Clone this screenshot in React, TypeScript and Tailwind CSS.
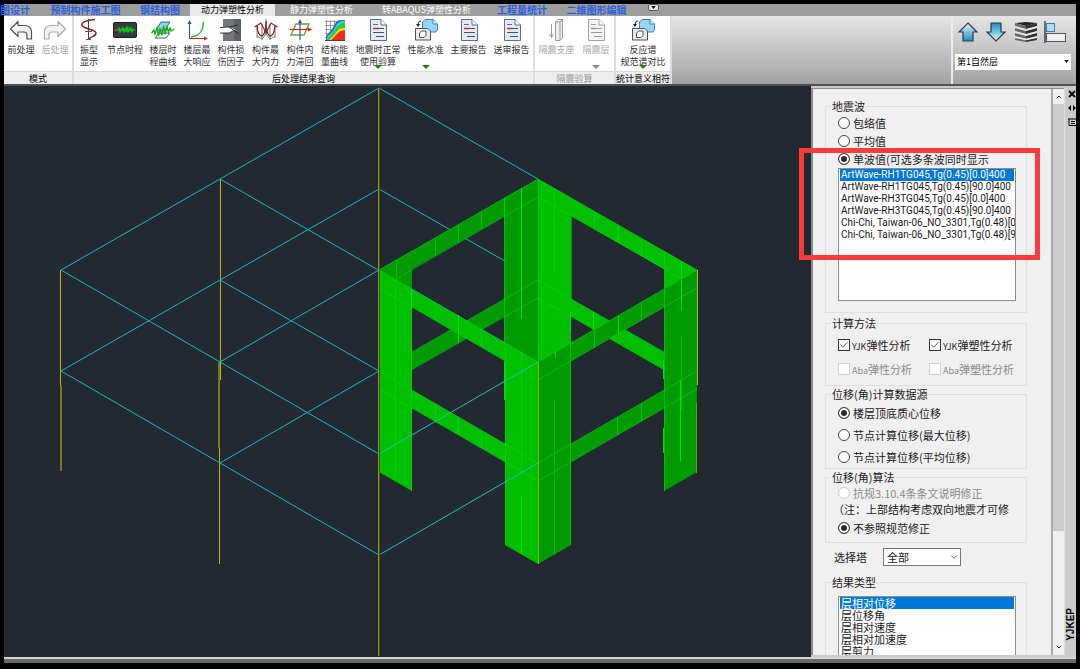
import { useState, type ReactNode } from 'react'
import { Check, ChevronDown, ChevronUp } from 'lucide-react'

const waves = [
  'ArtWave-RH1TG045,Tg(0.45)[0.0]400',
  'ArtWave-RH1TG045,Tg(0.45)[90.0]400',
  'ArtWave-RH3TG045,Tg(0.45)[0.0]400',
  'ArtWave-RH3TG045,Tg(0.45)[90.0]400',
  'Chi-Chi, Taiwan-06_NO_3301,Tg(0.48)[0.0]',
  'Chi-Chi, Taiwan-06_NO_3301,Tg(0.48)[90.0]'
]

const results = ['层相对位移', '层位移角', '层相对速度', '层相对加速度', '层剪力']

const tabs = [
  { label: '图设计', style: 'w-[37px] justify-end pr-[11px] text-[10px] font-bold text-[#2b5fe3]' },
  { label: '预制构件施工图', style: 'w-[89px] justify-center text-[10px] font-bold text-[#2b5fe3]' },
  { label: '钢结构图', style: 'w-[60px] justify-center text-[10px] font-bold text-[#2b5fe3]' },
  { label: '动力弹塑性分析', style: 'w-[85px] justify-center text-[9px] text-black bg-[#e9e9e9]' },
  { label: '静力弹塑性分析', style: 'w-[93px] justify-center text-[9px] text-white' },
  { label: '转ABAQUS弹塑性分析', style: 'w-[117px] justify-center text-[9px] text-white' },
  { label: '工程量统计', style: 'w-[74px] justify-center text-[10px] font-bold text-[#2b5fe3]' },
  { label: '二维图形编辑', style: 'w-[75px] justify-center text-[10px] font-bold text-[#2b5fe3]' }
]

/* ---------- ribbon icons ---------- */

function Svg({ children }: { children: ReactNode }) {
  return (
    <svg viewBox="0 0 24 24" className="h-6 w-6 shrink-0" fill="none" aria-hidden="true">
      {children}
    </svg>
  )
}

function BackIcon() {
  return (
    <Svg>
      <path d="M1.500 11 L9 3.500 V7.500 H16 Q22.500 8 22.500 14 V21 H18 V17 Q18 14 15 14 H9 V18.500 Z" fill="#f6f7f8" stroke="#4b5157" strokeWidth="1.200" strokeLinejoin="round" />
    </Svg>
  )
}

function ForwardIcon() {
  return (
    <Svg>
      <path d="M22.500 11 L15 3.500 V7.500 H8 Q1.500 8 1.500 14 V21 H6 V17 Q6 14 9 14 H15 V18.500 Z" fill="#f4f4f4" stroke="#a9a9a9" strokeWidth="1.200" strokeLinejoin="round" />
    </Svg>
  )
}

function ModeIcon() {
  return (
    <Svg>
      <path d="M11.500 1 V22" stroke="#444" />
      <path d="M18 1.500 C10 2 4 4 5 7.500 C6 11 19 11 19 15 C19 19 13 18 11 22" stroke="#8c2020" strokeWidth="1.500" />
      <path d="M8 13.500 H15 M9 21.500 H14" stroke="#555" />
    </Svg>
  )
}

function NodeIcon() {
  return (
    <Svg>
      <rect x="0.500" y="4.500" width="23" height="15" rx="1.500" fill="#353b41" stroke="#17191b" />
      <path d="M2 12 H5 L6 10 L7 14 L8 11 L9 13 L10 9 L11 15 L12 10 L13 14 L14 8 L15 15 L16 10 L17 13 L18 10 L19 14 L20 11 L21 12 H22.500" stroke="#10c81c" strokeWidth="1.100" />
      <circle cx="2.500" cy="12" r="1.300" fill="#f01818" />
    </Svg>
  )
}

function StoryCurveIcon() {
  return (
    <Svg>
      <path d="M8 15 H19 L15 20 H4 Z" fill="#eef7fc" stroke="#47697f" />
      <path d="M10 4 H19 L14 12 H5 Z" fill="#9bcdf0" stroke="#2b65a0" />
      <path d="M0.500 15 L3 12 L4 16 L6 10 L7.500 18 L9 11 L11 17 L12.500 8 L14 16 L16 9 L17.500 14 L19 10 L20 13 L23.500 11" stroke="#12ad18" strokeWidth="1.400" />
    </Svg>
  )
}

function AxesIcon() {
  return (
    <Svg>
      <path d="M4.500 21 V4" stroke="#2454b8" />
      <path d="M2.500 6 L4.500 2 L6.500 6 Z" fill="#2454b8" />
      <path d="M4 20.500 H20" stroke="#d12222" />
      <path d="M19 18.500 L23 20.500 L19 22.500 Z" fill="#d12222" />
      <path d="M6 19 C14 18 18 14 18.500 4" stroke="#19c427" strokeWidth="1.500" />
    </Svg>
  )
}

function DamageIcon() {
  return (
    <Svg>
      <rect x="4" y="1" width="18" height="22" fill="#74777a" />
      <rect x="15" y="1" width="7" height="22" fill="#5f6265" />
      <path d="M1 9 L10 9 L17 12 L10 15 L1 15 L4 12 Z" fill="#fff" />
      <path d="M1 9.500 L10 9 L20 16 M1 15 L10 15 L16 12 M10 9 L19 7" stroke="#222" strokeWidth="0.900" />
    </Svg>
  )
}

function ForceIcon() {
  return (
    <Svg>
      <path d="M12 1 V17 M3 7 V20 M21 7 V20 M8 6 V22 M16 6 V22" stroke="#555" strokeWidth="0.800" />
      <path d="M0.500 9 L7 5 L12 15 L17 5 L23.500 9" stroke="#8d2323" strokeWidth="1.200" />
      <path d="M3 8 Q4 18 8 18 Q12 16 12 3 Q12 16 16 18 Q20 18 21 8" stroke="#8d2323" strokeWidth="1.300" />
      <path d="M3 18 L8 21 L12 16 L16 21 L21 18" stroke="#3a9a4c" strokeWidth="0.900" />
    </Svg>
  )
}

function PlaneIcon() {
  return (
    <Svg>
      <path d="M8 6 H21 L16 17 H3 Z" stroke="#6fa043" strokeWidth="1.400" />
      <path d="M12 22 V3" stroke="#2c58b6" strokeWidth="1.200" />
      <path d="M10 5 L12 1 L14 5 Z" fill="#2c58b6" />
      <path d="M2 11.500 H21" stroke="#d02525" strokeWidth="1.200" />
      <path d="M20 9.500 L24 11.500 L20 13.500 Z" fill="#d02525" />
    </Svg>
  )
}

function EnergyIcon() {
  return (
    <Svg>
      <path d="M3.500 2 V22 M7.500 2 V22 M11.500 2 V22 M15.500 2 V22 M2 3.500 H22 M2 7.500 H22 M2 11.500 H22 M2 15.500 H22 M2 19.500 H22" stroke="#888" strokeWidth="0.800" />
      <path d="M3 22 V18 L9 11 L13 4 L17 2 H22 V22 Z" fill="#2866e5" />
      <path d="M4 22 V19 L10 13 L14 6 L18 3 H22 V22 Z" fill="#35d8c6" />
      <path d="M4 22 L10 14 L15 8 L19 5 H22 V22 Z" fill="#33c926" />
      <path d="M6 22 L12 16 L16 11 L22 10 V22 Z" fill="#f2e326" />
      <path d="M8 22 L13 17 L17 13 L22 12 V22 Z" fill="#f52a20" />
      <path d="M2 22.500 H22" stroke="#444" />
    </Svg>
  )
}

function ReportIcon({ muted = false }: { muted?: boolean }) {
  const edge = muted ? '#a2a2a2' : '#5b6f8c'
  return (
    <Svg>
      <path d="M4.500 1.500 H15 L20.500 7 V22.500 H4.500 Z" fill={muted ? '#f5f5f5' : '#e4ebf7'} stroke={edge} strokeLinejoin="round" />
      <path d="M15 1.500 V7 H20.500" fill="#fff" stroke={edge} />
      <path d="M7 6.500 H12" stroke={edge} />
      <path d="M7 10.500 H12" stroke={muted ? '#999' : '#d12b2b'} strokeWidth="1.500" />
      <path d="M12 10.500 H18 M7 14.500 H18 M10 18.500 H18" stroke={muted ? '#999' : '#47536a'} />
    </Svg>
  )
}

function CompareIcon() {
  return (
    <Svg>
      <path d="M8.500 4 L11 1.500 H19 L23.500 6 V12 L22 14 H8.500 Z" fill="#9ad4f4" stroke="#3c83ba" />
      <path d="M19 1.500 V6 H23.500" fill="#d8f0fc" stroke="#3c83ba" />
      <path d="M1.500 10.500 H14 L16.500 13 V22 H1.500 Z" fill="#e9ebee" stroke="#4b5057" />
      <path d="M5.500 15 L7.500 13 H12 V17.500 L10 19.500 H5.500 Z" fill="#fff" stroke="#4b5057" />
      <path d="M7 3 Q4 3 4 7" stroke="#222" />
      <path d="M2 6 H6 L4 9 Z" fill="#222" />
    </Svg>
  )
}

function BearingIcon() {
  return (
    <Svg>
      <path d="M10.500 4 L13 1.500 H17.500 V20 L15 22.500 H10.500 Z" fill="#efefef" stroke="#9b9b9b" />
      <path d="M10.500 4 H15 V22 M15 4 L17.500 1.500" stroke="#9b9b9b" />
      <path d="M6.500 6 V19 M4.500 16 L6.500 19.500 L8.500 16" stroke="#9b9b9b" />
    </Svg>
  )
}

/* ---------- ribbon ---------- */

type ToolProps = {
  icon: ReactNode
  lines: string[]
  width?: string
  disabled?: boolean
  menu?: boolean
}

function Tool({ icon, lines, width = 'w-[34px]', disabled, menu }: ToolProps) {
  return (
    <button
      disabled={disabled}
      className={`relative flex shrink-0 flex-col items-center pt-[2px] text-[9px] leading-[12px] whitespace-nowrap ${width} ${
        disabled ? 'text-[#a8a8a8]' : 'text-[#333]'
      }`}
    >
      {icon}
      <span className="mt-[2px] flex flex-col items-center">
        {lines.map(line => (
          <span key={line}>{line}</span>
        ))}
      </span>
      {menu && (
        <svg viewBox="0 0 8 4" className={`absolute bottom-[2px] h-1 w-2 ${disabled ? 'fill-[#8b8b8b]' : 'fill-[#23800c]'}`}>
          <path d="M0 0 H8 L4 4 Z" />
        </svg>
      )}
    </button>
  )
}

function Group({ title, muted, children }: { title: string; muted?: boolean; children: ReactNode }) {
  return (
    <section className="flex shrink-0 flex-col border-r-2 border-[#dcdcdc] bg-white">
      <div className="flex min-h-0 flex-1">{children}</div>
      <h2
        className={`h-[13px] border-t border-[#dadada] bg-[#ededed] text-center text-[9px] leading-[13px] whitespace-nowrap ${
          muted ? 'text-[#999]' : 'text-black'
        }`}
      >
        {title}
      </h2>
    </section>
  )
}

function StoryPicker() {
  return (
    <div className="flex w-[125px] shrink-0 flex-col border-l-2 border-[#ececec] pl-[2px]">
      <div className="flex h-[35px] items-start justify-between pt-[5px] pr-[10px] pl-[2px]">
        <button aria-label="上一层">
          <svg viewBox="0 0 22 22" className="h-[22px] w-[22px]">
            <defs>
              <linearGradient id="up" x1="0" y1="0" x2="0" y2="1">
                <stop offset="0" stopColor="#e4f7fd" />
                <stop offset="1" stopColor="#148bc8" />
              </linearGradient>
            </defs>
            <path d="M11 2 L20 11 H16 V20 H6 V11 H2 Z" fill="url(#up)" stroke="#333b42" strokeWidth="1.200" />
          </svg>
        </button>
        <button aria-label="下一层">
          <svg viewBox="0 0 22 22" className="h-[22px] w-[22px]">
            <defs>
              <linearGradient id="down" x1="0" y1="0" x2="0" y2="1">
                <stop offset="0" stopColor="#148bc8" />
                <stop offset="1" stopColor="#e4f7fd" />
              </linearGradient>
            </defs>
            <path d="M11 20 L20 11 H16 V2 H6 V11 H2 Z" fill="url(#down)" stroke="#333b42" strokeWidth="1.200" />
          </svg>
        </button>
        <button aria-label="全楼">
          <svg viewBox="0 0 24 22" className="h-[22px] w-[24px]">
            <path d="M1 2 L12 1 L23 2 L12 5 Z" fill="#222" />
            <path d="M1 2 L12 5 V8 L1 5 Z M1 7 L12 10 V13 L1 10 Z M1 12 L12 15 V18 L1 15 Z M1 17 L12 19 V21 L1 19 Z" fill="#6b6b6b" />
            <path d="M23 2 L12 5 V8 L23 5 Z M23 7 L12 10 V13 L23 10 Z M23 12 L12 15 V18 L23 15 Z M23 17 L12 19 V21 L23 19 Z" fill="#333" />
            <path d="M1 6 L12 9 L23 6 M1 11 L12 14 L23 11 M1 16 L12 18.500 L23 16" stroke="#e6e6e6" strokeWidth="1.500" fill="none" />
          </svg>
        </button>
        <button aria-label="对齐">
          <svg viewBox="0 0 22 22" className="h-[22px] w-[22px]">
            <path d="M1 0 V22" stroke="#222" strokeWidth="1.200" />
            <rect x="2.500" y="2.500" width="8" height="8" fill="#a9def4" stroke="#3a7fa8" />
            <rect x="2.500" y="12.500" width="19" height="8" fill="#eeeef4" stroke="#555" />
          </svg>
        </button>
      </div>
      <label className="relative mt-[3px] mr-[5px] block">
        <span className="sr-only">楼层</span>
        <select className="block h-4 w-full appearance-none bg-white pl-[2px] text-[9px] text-black">
          <option>第1自然层</option>
        </select>
        <svg viewBox="0 0 6 4" className="pointer-events-none absolute top-[6px] right-[2px] h-[3px] w-[5px]">
          <path d="M0 0 H6 L3 4 Z" />
        </svg>
      </label>
    </div>
  )
}

function Ribbon() {
  return (
    <header className="shrink-0">
      <nav className="flex h-[12px] bg-[#9d9d9d]">
        {tabs.map(({ label, style }) => (
          <button key={label} className={`flex shrink-0 items-center leading-[12px] whitespace-nowrap ${style}`}>
            {label}
          </button>
        ))}
        <button aria-label="最小化功能区" className="ml-[14px] flex h-[7px] w-[11px] items-center justify-center rounded-[2px] border border-[#555] bg-[#e8e8e8]">
          <svg viewBox="0 0 6 4" className="h-[3px] w-[5px]">
            <path d="M0 0 H6 L3 4 Z" />
          </svg>
        </button>
      </nav>
      <div className="flex h-[68px] bg-gradient-to-b from-[#e6e6e6] to-[#a3a3a3]">
        <Group title="模式">
          <Tool icon={<BackIcon />} lines={['前处理']} />
          <Tool icon={<ForwardIcon />} lines={['后处理']} disabled />
        </Group>
        <Group title="后处理结果查询">
          <Tool icon={<ModeIcon />} lines={['振型', '显示']} width="w-[30px]" />
          <Tool icon={<NodeIcon />} lines={['节点时程']} width="w-[42px]" />
          <Tool icon={<StoryCurveIcon />} lines={['楼层时', '程曲线']} />
          <Tool icon={<AxesIcon />} lines={['楼层最', '大响应']} />
          <Tool icon={<DamageIcon />} lines={['构件损', '伤因子']} />
          <Tool icon={<ForceIcon />} lines={['构件最', '大内力']} width="w-[35px]" />
          <Tool icon={<PlaneIcon />} lines={['构件内', '力滞回']} />
          <Tool icon={<EnergyIcon />} lines={['结构能', '量曲线']} width="w-[35px]" />
          <Tool icon={<ReportIcon />} lines={['地震时正常', '使用验算']} width="w-[52px]" menu />
          <Tool icon={<CompareIcon />} lines={['性能水准']} width="w-[43px]" menu />
          <Tool icon={<ReportIcon />} lines={['主要报告']} width="w-[43px]" />
          <Tool icon={<ReportIcon />} lines={['送审报告']} width="w-[43px]" />
        </Group>
        <Group title="隔震验算" muted>
          <Tool icon={<BearingIcon />} lines={['隔震支座']} width="w-[43px]" disabled />
          <Tool icon={<ReportIcon muted />} lines={['隔震层']} width="w-[36px]" disabled menu />
        </Group>
        <Group title="统计意义相符">
          <Tool icon={<CompareIcon />} lines={['反应谱', '规范谱对比']} width="w-[54px]" menu />
        </Group>
        <div className="flex-1" />
        <StoryPicker />
      </div>
      <div className="h-[2px] bg-[#4d5154]" />
    </header>
  )
}

/* ---------- model view ---------- */

const LIGHT = '#00be00'
const DARK = '#009b00'
const EDGE = '#00df10'

type Pt = [number, number]

// A vertical plate standing on the segment a-b, from its top edge down by h
function Plate({ a, b, h, fill }: { a: Pt; b: Pt; h: number; fill: string }) {
  return <polygon points={`${a[0]},${a[1]} ${b[0]},${b[1]} ${b[0]},${b[1] + h} ${a[0]},${a[1] + h}`} fill={fill} />
}

function ModelView() {
  return (
    <svg viewBox="4 86 807 571" className="h-full w-full" role="img" aria-label="结构模型">
      <g fill="none">
        <path d="M60.500 270 V385 M220.500 179 V380 M219.500 448 V564" stroke="#bdb80a" />
        <path d="M61 385 V471 M219 362 V448" stroke="#77751d" strokeWidth="2" />
      </g>
      <g stroke="#18b6bd" fill="none">
        <path d="M538 179 L379 88 L61 270 L379 454 M220 179 L538 362 M379 270 L220 362" />
        <path d="M538 280 L379 189 L61 371 L379 555 M220 280 L379 371 L220 463" />
      </g>

      {/* rear column and beams */}
      <Plate a={[504, 198]} b={[538, 179]} h={202} fill={DARK} />
      <Plate a={[538, 179]} b={[571, 198]} h={202} fill={LIGHT} />
      <Plate a={[379, 371]} b={[538, 280]} h={18} fill={DARK} />
      <Plate a={[538, 280]} b={[697, 371]} h={18} fill={LIGHT} />
      <Plate a={[379, 270]} b={[412, 251]} h={202} fill={DARK} />
      <Plate a={[664, 251]} b={[697, 270]} h={202} fill={LIGHT} />
      <Plate a={[379, 270]} b={[538, 179]} h={18} fill={DARK} />
      <Plate a={[538, 179]} b={[697, 270]} h={18} fill={LIGHT} />
      <g stroke={EDGE} fill="none" strokeOpacity="0.550">
        <path d="M379 270 L538 179 L697 270 M396 279 L538 197 L682 279" />
        <path d="M412 352 L538 280 L664 352 M504 317 L538 298 L571 317" />
        <path d="M504.500 198 V343 M571.500 217 V299 M554.500 189 V274 M538.500 179 V362" />
        <path d="M396.500 260 V278 M435.500 238 V256 M458.500 225 V243 M481.500 211 V229 M504.500 198 V216" />
        <path d="M594.500 212 V230 M618.500 225 V243 M641.500 239 V257 M664.500 252 V269" />
      </g>
      <path d="M521.500 188 V319 M681.500 261 V279 M593.500 312 V330 M570.500 312 V332" stroke={EDGE} />

      {/* side columns */}
      <Plate a={[379, 270]} b={[412, 289]} h={202} fill={LIGHT} />
      <Plate a={[664, 289]} b={[697, 270]} h={202} fill={DARK} />

      {/* front column and beams */}
      <Plate a={[379, 371]} b={[538, 463]} h={18} fill={LIGHT} />
      <Plate a={[538, 463]} b={[697, 371]} h={18} fill={DARK} />
      <Plate a={[505, 343]} b={[538, 362]} h={202} fill={LIGHT} />
      <Plate a={[538, 362]} b={[571, 343]} h={202} fill={DARK} />
      <Plate a={[379, 270]} b={[538, 362]} h={18} fill={LIGHT} />
      <Plate a={[538, 362]} b={[697, 270]} h={18} fill={DARK} />
      <g stroke={EDGE} fill="none" strokeOpacity="0.550">
        <path d="M379 270 L538 362 L697 270 M379 288 L538 380 L697 288" />
        <path d="M379 371 L538 463 L697 371 M379 389 L538 481 L697 389" />
        <path d="M395.500 280 V482 M411.500 289 V491 M505.500 343 V545 M521.500 353 V478 M554.500 400 V555" />
        <path d="M570.500 343 V545 M664.500 289 V491 M681.500 336 V410 M435.500 302 V320 M481.500 329 V347" />
        <path d="M594.500 330 V348 M641.500 302 V320 M435.500 404 V422 M458.500 417 V435 M481.500 430 V448" />
        <path d="M617.500 417 V435 M641.500 403 V421" />
      </g>
      <path d="M411.500 290 V308 M458.500 315 V343 M521.500 496 V554 M618.500 316 V334 M681.500 280 V311 M680.500 380 V461 M663.500 428 V453 M663.500 360 V379 M504.500 362 V400 M555.500 352 V358" stroke={EDGE} />

      <path d="M538 362 L379 454 M538 463 L379 555" stroke="#18c2b4" />
      <path d="M378.500 88 V656" stroke="#8f8f16" strokeWidth="1" />
      <path d="M379.500 88 V656" stroke="#4d521c" strokeWidth="1" />
      <path d="M538.500 362 V564" stroke="#86b800" />
      <path d="M697.500 270 V385" stroke="#a0c800" />
      <path d="M696.500 403 V473" stroke="#4fae00" />
    </svg>
  )
}

/* ---------- dock panel ---------- */

function Radio({ name, label, checked, disabled, onChange, row }: {
  name: string
  label: string
  checked?: boolean
  disabled?: boolean
  onChange?: () => void
  row: string
}) {
  return (
    <label className={`flex items-center gap-[3px] whitespace-nowrap ${row} ${disabled ? 'text-[#8a8a8a]' : ''}`}>
      <input
        type="radio"
        name={name}
        checked={!!checked}
        disabled={disabled}
        onChange={onChange}
        className="h-3 w-3 shrink-0 appearance-none rounded-full border border-[#444] bg-white checked:bg-[#2b2b2b] checked:shadow-[inset_0_0_0_2px_white] disabled:border-[#ccc]"
      />
      {label}
    </label>
  )
}

function CheckItem({ label, initial = false, disabled }: { label: string; initial?: boolean; disabled?: boolean }) {
  const [on, setOn] = useState(initial)
  return (
    <label className={`relative flex h-6 items-center gap-[2px] whitespace-nowrap ${disabled ? 'text-[#8a8a8a]' : ''}`}>
      <input
        type="checkbox"
        checked={on}
        disabled={disabled}
        onChange={() => setOn(!on)}
        className="h-3 w-3 shrink-0 appearance-none border border-[#333] bg-white disabled:border-[#d2d2d2]"
      />
      {on && <Check className="pointer-events-none absolute left-[1px] h-[10px] w-[10px] text-[#333]" />}
      <span>
        <span className="text-[9px]">{label.slice(0, 3)}</span>
        {label.slice(3)}
      </span>
    </label>
  )
}

function Section({ title, style, children }: { title: string; style: string; children: ReactNode }) {
  return (
    <fieldset className={`min-w-0 border border-[#dfdfdf] pl-[12px] ${style}`}>
      <legend className="-ml-[7px] px-[1px] text-[11px] leading-[16px]">{title}</legend>
      {children}
    </fieldset>
  )
}

function ListBox({ label, items, style }: { label: string; items: string[]; style: string }) {
  const [selected, setSelected] = useState(0)
  return (
    <ul role="listbox" aria-label={label} className={`mr-[10px] overflow-hidden border border-[#8a8d94] bg-white px-[1px] leading-[12px] ${style}`}>
      {items.map((item, i) => (
        <li
          key={item}
          role="option"
          aria-selected={i === selected}
          onClick={() => setSelected(i)}
          className={`h-3 cursor-default pl-[1px] whitespace-nowrap ${i === selected ? 'bg-[#0078d7] text-white' : ''}`}
        >
          {item}
        </li>
      ))}
    </ul>
  )
}

function Dock() {
  const [value, setValue] = useState('单波值(可选多条波同时显示')
  const [source, setSource] = useState('楼层顶底质心位移')

  return (
    <aside className="relative flex w-[265px] shrink-0 bg-[#cbcbcb] pt-[2px] pb-[2px]">
      <div className="flex min-h-0 min-w-0 flex-1 border-t border-l-2 border-[#8d8d8d]">
        <div className="flex min-h-0 min-w-0 flex-1 flex-col overflow-hidden border-r-2 border-[#aaa] bg-[#f0f0f0] pt-[9px] pr-[24px] pl-[12px] text-[11px] text-[#1a1a1a]">
          <Section title="地震波" style="shrink-0 pb-[11px]">
            {['包络值', '平均值', '单波值(可选多条波同时显示'].map(item => (
              <Radio key={item} name="value" label={item} row="h-[18px]" checked={value === item} onChange={() => setValue(item)} />
            ))}
            <ListBox label="地震波" items={waves} style="h-[133px] font-['Roboto',sans-serif] text-[10px]" />
          </Section>

          <Section title="计算方法" style="mt-[2px] shrink-0 pt-[2px] pb-[4px]">
            <div className="grid grid-cols-[91px_1fr]">
              <CheckItem label="YJK弹性分析" initial />
              <CheckItem label="YJK弹塑性分析" initial />
              <CheckItem label="Aba弹性分析" disabled />
              <CheckItem label="Aba弹塑性分析" disabled />
            </div>
          </Section>

          <Section title="位移(角)计算数据源" style="shrink-0">
            {['楼层顶底质心位移', '节点计算位移(最大位移)', '节点计算位移(平均位移)'].map(item => (
              <Radio key={item} name="source" label={item} row="h-[22px]" checked={source === item} onChange={() => setSource(item)} />
            ))}
          </Section>

          <Section title="位移(角)算法" style="shrink-0 pb-[3px]">
            <Radio name="method" label="抗规3.10.4条条文说明修正" row="h-[16px]" disabled />
            <p className="-ml-[5px] h-[16px] leading-[16px] whitespace-nowrap">（注：上部结构考虑双向地震才可修</p>
            <Radio name="method" label="不参照规范修正" row="h-[22px]" checked />
          </Section>

          <div className="mt-[4px] flex h-[20px] shrink-0 items-center pl-[9px]">
            <label htmlFor="tower" className="w-[49px]">选择塔</label>
            <div className="relative flex items-center">
              <select id="tower" className="h-[18px] w-[78px] appearance-none border border-[#777] bg-white pl-[3px] text-[11px] leading-[16px]">
                <option>全部</option>
              </select>
              <ChevronDown className="pointer-events-none absolute right-[2px] h-[10px] w-[10px] text-[#444]" />
            </div>
          </div>

          <Section title="结果类型" style="mt-[7px] min-h-0 shrink-0 pt-[6px]">
            <ListBox label="结果类型" items={results} style="h-[120px]" />
          </Section>
        </div>

        <div className="flex w-[11px] shrink-0 flex-col bg-[#f0f0f0]">
          <button aria-label="向上滚动" className="flex h-[15px] items-center justify-center">
            <ChevronUp className="h-2 w-2 text-[#333]" strokeWidth={3} />
          </button>
          <div className="flex min-h-0 flex-1 flex-col">
            <div className="h-4/5 bg-[#cbcbcb]" />
          </div>
          <button aria-label="向下滚动" className="flex h-[17px] items-center justify-center">
            <ChevronDown className="h-2 w-2 text-[#333]" strokeWidth={3} />
          </button>
        </div>
      </div>

      <div className="flex w-[12px] shrink-0 flex-col items-end justify-between border-l border-[#ddd] bg-[#cbcbcb] pt-[2px] pb-[14px]">
        <div className="flex flex-col gap-[6px]">
          <button aria-label="关闭">
            <svg viewBox="0 0 8 8" className="h-2 w-2"><path d="M1 1 L7 7 M7 1 L1 7" stroke="#000" strokeWidth="1.800" /></svg>
          </button>
          <button aria-label="自动隐藏">
            <svg viewBox="0 0 8 8" className="h-2 w-2"><path d="M0 4 L3 1 V7 Z M5 1 L8 4 L5 7 Z" /></svg>
          </button>
          <button aria-label="特性">
            <svg viewBox="0 0 8 8" className="h-2 w-2" fill="none"><path d="M0 1 H8 M1 1 V7.500 H8 M3 3.500 H7 M3 5.500 H7" stroke="#000" /></svg>
          </button>
        </div>
        <span className="rotate-180 font-['Liberation_Sans',sans-serif] text-[10px] leading-[10px] font-bold text-black [writing-mode:vertical-rl]">YJKEP</span>
      </div>

      <div className="pointer-events-none absolute top-[62px] -left-[12px] h-[112px] w-[241px] border-[5px] border-[#ff3a3a]" />
    </aside>
  )
}

export default function App() {
  return (
    <div className="flex h-screen w-full flex-col overflow-hidden bg-black px-1 pt-1 pb-[6px] font-['Noto_Sans_CJK_SC',sans-serif]">
      <Ribbon />
      <main className="flex min-h-0 flex-1">
        <div className="min-w-0 flex-1 bg-[#222931]">
          <ModelView />
        </div>
        <Dock />
      </main>
      <footer className="h-[6px] shrink-0 border-t-2 border-[#d5d8d8] bg-[#686c69]" />
    </div>
  )
}
